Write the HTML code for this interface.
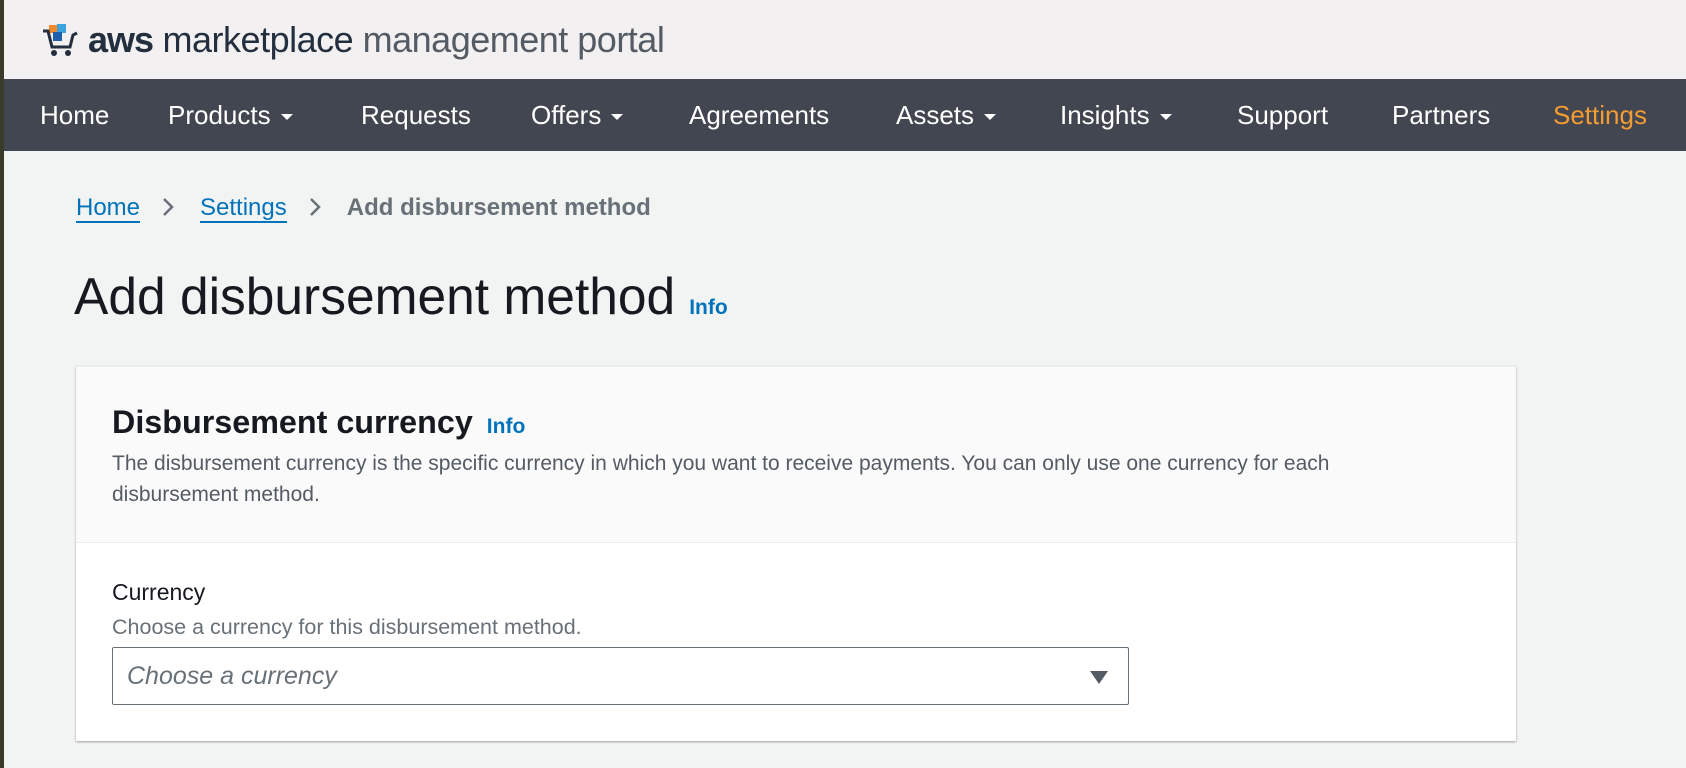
<!DOCTYPE html>
<html><head><meta charset="utf-8"><style>
*{margin:0;padding:0;box-sizing:border-box}
body{width:1686px;height:768px;overflow:hidden;background:#f2f3f3;font-family:"Liberation Sans",Arial,sans-serif;position:relative}
.strip{position:absolute;left:0;top:0;width:4px;height:768px;background:#3a3a2a}
.top{position:absolute;left:4px;top:0;right:0;height:79px;background:#f2f0f1}
.logo{position:absolute;left:36px;top:20px;height:40px;display:flex;align-items:center}
.logo .t{font-size:36px;color:#232f3e;letter-spacing:-0.5px;margin-left:8px;font-weight:300}
.logo b{font-weight:bold;letter-spacing:-1px}
.logo .g{color:#545b64}
.nav{position:absolute;left:4px;top:79px;right:0;height:72px;background:#424650}
.nav span{position:absolute;top:21px;font-size:26px;color:#fff;white-space:nowrap}
.car{display:inline-block;width:0;height:0;border-left:6px solid transparent;border-right:6px solid transparent;border-top:6px solid #fff;vertical-align:middle;margin-left:10px}
.bc{position:absolute;top:194px;left:76px;font-size:24px;color:#687078;white-space:nowrap}
.bc a{color:#0073bb;text-decoration:none;border-bottom:2px solid #0073bb}
.bc svg{margin:0 26px 0 22px;vertical-align:-2px}
h1{position:absolute;left:74px;top:266px;font-size:51.5px;font-weight:normal;color:#16191f;white-space:nowrap}
.info{color:#0073bb;font-weight:bold;font-size:21px;margin-left:14px}
.card{position:absolute;left:76px;top:366px;width:1440px;height:375px;background:#fff;box-shadow:0 1px 2px rgba(0,0,0,.35);border-top:1px solid #eaeded}
.ch{height:176px;background:#fafafa;border-bottom:1px solid #eaeded;padding:37px 36px 0}
.ch h2{font-size:32.3px;color:#16191f;white-space:nowrap}
.ch p{font-size:21px;color:#545b64;line-height:31px;margin-top:7px;width:1290px}
.lab{position:absolute;left:36px;top:212px;font-size:23px;color:#16191f}
.help{position:absolute;left:36px;top:248px;font-size:21.5px;color:#687078}
.sel{position:absolute;left:36px;top:280px;width:1017px;height:58px;border:1px solid #687078;border-radius:2px}
.sel i{position:absolute;left:14px;top:14px;font-size:25px;color:#687078}
.sel .ar{position:absolute;right:20px;top:23px;width:0;height:0;border-left:9px solid transparent;border-right:9px solid transparent;border-top:13px solid #545b64}
</style></head><body>
<div class="strip"></div>
<div class="top"><div class="logo">
<svg width="40" height="34" viewBox="0 0 36 34"><rect x="7" y="2" width="8" height="8" fill="#f08a2c"/><rect x="15" y="1" width="9" height="9" fill="#3ba4e0"/><rect x="11" y="9" width="9" height="9" fill="#1f5fb0"/><path d="M1 8 L6 8 L10 24 L28 24 L31 12 L35 10" stroke="#232f3e" stroke-width="3" fill="none"/><circle cx="12" cy="30" r="3" fill="#232f3e"/><circle cx="26" cy="30" r="3" fill="#232f3e"/></svg>
<span class="t"><b>aws</b> marketplace <span class="g">management portal</span></span></div></div>
<div class="nav">
<span style="left:36px">Home</span>
<span style="left:164px">Products<i class="car"></i></span>
<span style="left:357px">Requests</span>
<span style="left:527px">Offers<i class="car"></i></span>
<span style="left:685px">Agreements</span>
<span style="left:892px">Assets<i class="car"></i></span>
<span style="left:1056px">Insights<i class="car"></i></span>
<span style="left:1233px">Support</span>
<span style="left:1388px">Partners</span>
<span style="left:1549px;color:#f49b32">Settings</span>
</div>
<div class="bc"><a>Home</a><svg width="12" height="20" viewBox="0 0 12 20"><path d="M2 2 L10 10 L2 18" stroke="#687078" stroke-width="2.5" fill="none"/></svg><a>Settings</a><svg width="12" height="20" viewBox="0 0 12 20"><path d="M2 2 L10 10 L2 18" stroke="#687078" stroke-width="2.5" fill="none"/></svg><b>Add disbursement method</b></div>
<h1>Add disbursement method<span class="info">Info</span></h1>
<div class="card">
<div class="ch"><h2>Disbursement currency<span class="info">Info</span></h2>
<p>The disbursement currency is the specific currency in which you want to receive payments. You can only use one currency for each disbursement method.</p></div>
<div class="lab">Currency</div>
<div class="help">Choose a currency for this disbursement method.</div>
<div class="sel"><i>Choose a currency</i><div class="ar"></div></div>
</div>
</body></html>
